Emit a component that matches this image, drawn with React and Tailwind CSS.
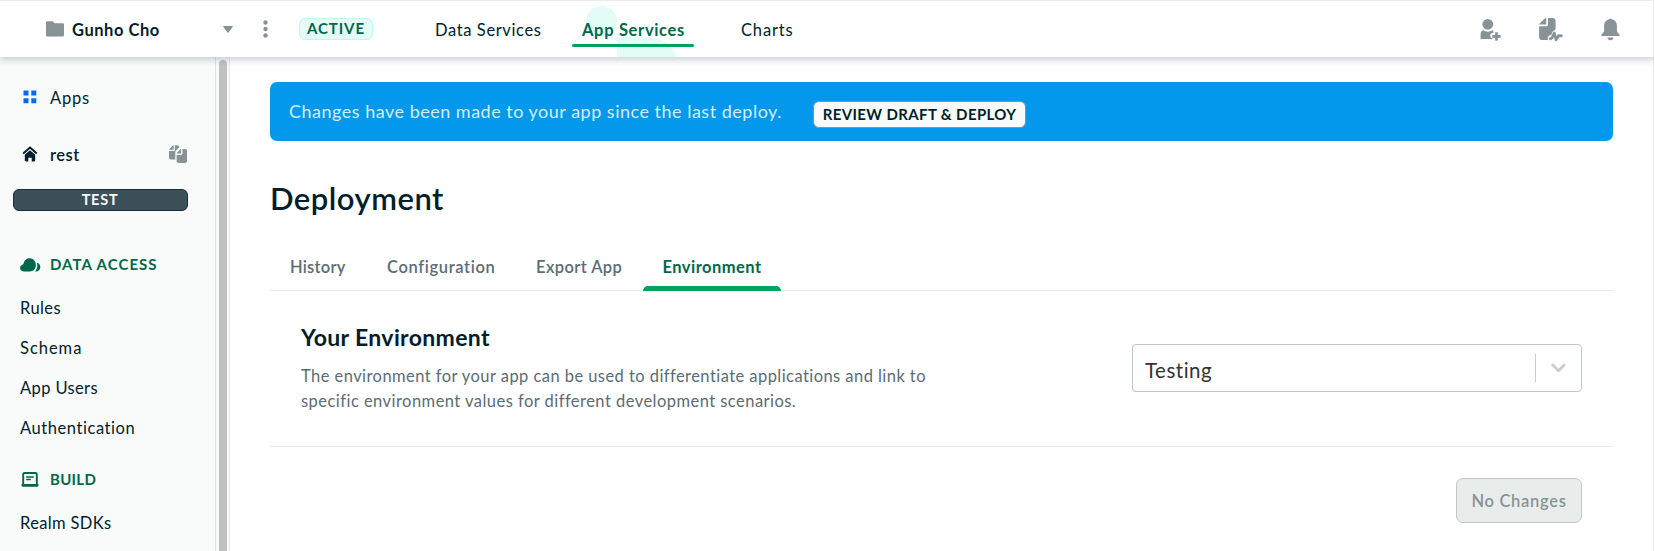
import React from "react";

const FolderIcon = () => (
  <svg className="block h-[16px] w-[18px] shrink-0" viewBox="0 0 18 16" fill="#889397">
    <path d="M0 1.6C0 .9.6.3 1.300.3H6.400c.5 0 .9.2 1.100.6l.6.9c.2.3.5.5.9.5h7.700c.7 0 1.300.6 1.300 1.300v10.600c0 .7-.6 1.300-1.300 1.300H1.300C.6 15.500 0 14.900 0 14.200z" />
  </svg>
);

const PersonPlusIcon = () => (
  <svg className="block h-[24px] w-[21px] shrink-0" viewBox="0 0 21 24" fill="#889397">
    <circle cx="7.800" cy="6.300" r="5.400" />
    <path d="M.6 21v-4.600C.6 14.200 1.500 12.900 3.200 12.300c1.400.9 2.900 1.400 4.600 1.400s3.200-.5 4.600-1.400c.4.1.7.300 1 .5v2.300h-.6a2.600 2.600 0 0 0-2.600 2.600 2.600 2.600 0 0 0 2.300 2.600V21z" />
    <path d="M15.700 14.800v2.900h-2.900v1.500h2.900v2.900h1.500v-2.900h2.900v-1.500h-2.900v-2.900z" stroke="#889397" strokeWidth="1.200" strokeLinejoin="round" />
  </svg>
);

const ActivityIcon = () => (
  <svg className="block h-[25px] w-[24px] shrink-0" viewBox="0 0 24 25" fill="#889397">
    <path d="M7.200 1v6.500H.3c0-.5.2-.9.6-1.300l4.800-4.600c.4-.4.9-.6 1.500-.6z" />
    <path d="M9 1h4.400c2 0 3.200 1.200 3.200 3.200v7.300c0 1.200-.5 1.700-1.700 2.200-1.100.5-1.500 1-1.900 2.300l-.6 1.800-1.900.8c-1.300.6-1.900 1.600-1.700 3l.2 1.500H3.300c-2 0-3.200-1.200-3.200-3.200V9.300h7.200C8.400 9.300 9 8.700 9 7.600z" />
    <path d="M11.400 21.800l1.700-.9 2.200-5 1.800 7 2.400-4.200 3 .1" fill="none" stroke="#889397" strokeWidth="2.700" strokeLinecap="round" strokeLinejoin="round" />
  </svg>
);

const BellIcon = () => (
  <svg className="block h-[23px] w-[19px] shrink-0" viewBox="0 0 19 23" fill="#889397">
    <path d="M8.200 1.300C8.500.8 9 .5 9.500.5s1 .3 1.300.8c3.200.6 5.100 3.100 5.100 6.400v4.600c0 1.300.6 2.400 2.100 3.800.5.5.8.8.8 1.300 0 .4-.3.6-.7.6H.9c-.4 0-.7-.2-.7-.6 0-.5.300-.8.8-1.300 1.500-1.400 2.100-2.500 2.100-3.800V7.700c0-3.300 1.900-5.800 5.100-6.400z" />
    <path d="M6.500 19.500h6c0 1.600-1.400 2.800-3 2.800s-3-1.200-3-2.800z" />
  </svg>
);

const GridIcon = () => (
  <svg className="block h-[14px] w-[14px]" viewBox="0 0 14 14" fill="#016bf8">
    <path d="M.5.5h5v5h-5zM8.300.5h5v5h-5zM.5 8.300h5v5h-5zM8.300 8.300h5v5h-5z" />
  </svg>
);

const HomeIcon = () => (
  <svg className="block h-[16px] w-[16px]" viewBox="0 0 16 16" fill="#001e2b">
    <path d="M1.200 7.500L8 1.500l6.800 6" fill="none" stroke="#001e2b" strokeWidth="1.900" />
    <path d="M8 4.200l5.200 4.600v5.400c0 .8-.4 1.200-1.200 1.200H9.700v-3.700H6.300v3.700H4c-.8 0-1.200-.4-1.200-1.200V8.800z" />
  </svg>
);

const CopyIcon = () => (
  <svg className="block h-[18px] w-[18px]" viewBox="0 0 18 18" fill="#889397">
    <path d="M4.700.2v4.500H.2c0-.4.200-.7.500-1L3.500.8c.3-.4.7-.6 1.200-.6z" />
    <path d="M6 .2h2.300c1.200 0 1.900.7 1.900 1.900v.6c-.5.1-.8.4-1.200.8L6.900 5.800c-.4.4-.6.900-.6 1.500v7.200H2.100C.7 14.500 0 13.800 0 12.400V6h4.300C5.400 6 6 5.500 6 4.400z" />
    <path d="M12.100 4v4.600H7.700c0-.4.200-.7.500-1l2.700-2.900c.3-.4.7-.6 1.200-.7z" />
    <path d="M13.500 4h2.400C17.300 4 18 4.700 18 6.100v9.700c0 1.400-.7 2.100-2.100 2.100H9.700c-1.400 0-2.100-.7-2.100-2.100V9.900h4.200c1.100 0 1.700-.6 1.700-1.700z" />
  </svg>
);

const CloudIcon = () => (
  <svg className="block h-[14px] w-[21px]" viewBox="0 0 21 14" fill="#00684a">
    <path d="M4.200 13.500C1.700 13.500.1 12 .1 9.900c0-2 1.400-3.500 3.300-3.700C4 2.700 6.300.3 9.500.3c3.700 0 6.400 2.900 6.400 6.800 0 3.800-2.600 6.400-6.100 6.400z" />
    <path d="M17 4.700c2.100.5 3.300 2.100 3.300 4.300 0 2.700-1.700 4.500-4.700 4.500h-.7c1.600-1.500 2.400-3.700 2.400-6.200 0-.9-.1-1.800-.3-2.600z" />
  </svg>
);

const LaptopIcon = () => (
  <svg className="block h-[15px] w-[18px]" viewBox="0 0 18 15" fill="none" stroke="#00684a">
    <path d="M2.200 12V2.300c0-.8.400-1.300 1.300-1.300h11c.9 0 1.300.5 1.300 1.300V12" strokeWidth="1.900" />
    <path d="M.5 12h17v1.300c0 .9-.5 1.500-1.400 1.500H1.900c-.9 0-1.400-.6-1.400-1.500z" fill="#00684a" stroke="none" />
    <path d="M5.200 5h7.600M5.200 7.500h4.700" strokeWidth="1.300" />
  </svg>
);

const NavLink = ({ children }) => <div className="flex h-10 items-center pt-px pl-5">{children}</div>;

export default function App() {
  return (
    <div className="flex h-[551px] w-[1654px] flex-col overflow-hidden whitespace-nowrap bg-white font-['Lato','Open_Sans',sans-serif] text-[16.5px] leading-6 text-[#001e2b]">
      <header className="relative z-10 flex h-[57px] shrink-0 items-center border-t border-r border-t-[#e8edeb] border-r-[#e8edeb] bg-white pr-[33px] pl-[46px] shadow-[0_3px_7px_0_rgba(0,30,43,0.2)]">
        <FolderIcon />
        <span className="ml-[8px] w-[151px] pt-[1px] font-bold tracking-[0.55px]">Gunho Cho</span>
        <svg className="block h-[7px] w-[10px]" viewBox="0 0 10 7" fill="#889397">
          <path d="M.7 0h8.600c.6 0 .8.5.4.9L5.500 6.500c-.3.400-.7.400-1 0L.3.900C-.1.500.1 0 .7 0z" />
        </svg>
        <svg className="ml-[30px] block h-[18px] w-[5px]" viewBox="0 0 5 18" fill="#889397">
          <circle cx="2.500" cy="2.500" r="2.200" />
          <circle cx="2.500" cy="9" r="2.200" />
          <circle cx="2.500" cy="15.500" r="2.200" />
        </svg>
        <span className="ml-[31px] flex h-[22px] w-[74px] items-center justify-center rounded-[6px] border border-[#c0fae6] bg-[#e3fcf7] pb-[2px] text-[15px] font-bold tracking-[0.9px] text-[#00684a]">ACTIVE</span>
        <nav className="ml-[62px] flex h-full grow items-center">
          <span className="w-[137px] pt-[1px] tracking-[0.62px]">Data Services</span>
          <div className="relative flex h-full w-[122px] items-center justify-center">
            <svg className="absolute top-0 left-0 block h-[56px] w-[122px]" viewBox="0 0 122 56" fill="#e3fcf7">
              <circle cx="29.500" cy="20.500" r="15.500" />
              <path d="M34 36h38c18 0 29 8 33 20H45V43c0-4-4-6-11-7z" />
            </svg>
            <span className="relative pt-[1px] pl-px font-bold tracking-[0.67px] text-[#00684a]">App Services</span>
            <span className="absolute bottom-[10px] left-0 h-[3px] w-full rounded-full bg-[#00a35c]" />
          </div>
          <span className="ml-[47px] pt-[1px] tracking-[0.85px]">Charts</span>
        </nav>
        <div className="flex items-center pt-px">
          <PersonPlusIcon />
          <span className="w-[38px]" />
          <ActivityIcon />
          <span className="w-[38px]" />
          <BellIcon />
        </div>
      </header>

      <div className="flex min-h-0 grow">
        <aside className="flex w-[216px] shrink-0 flex-col border-r border-[#e1e4e3] bg-[#f9fbfa] pt-[28px]">
          <div className="flex h-6 items-center pl-[23px]">
            <GridIcon />
            <span className="ml-[13px] pt-px tracking-[0.8px]">Apps</span>
          </div>
          <div className="mt-[33px] flex h-6 items-center pr-[28px] pl-[22px]">
            <HomeIcon />
            <span className="ml-[12px] grow pt-px font-semibold tracking-[0.5px]">rest</span>
            <CopyIcon />
          </div>
          <div className="mt-[23px] ml-[13px] flex h-[22px] w-[175px] items-center justify-center rounded-[6px] border border-[#1c2d38] bg-[#3d4f58] pr-px text-[14.5px] font-bold tracking-[0.75px] text-[#f9fbfa]">TEST</div>
          <div className="mt-[41px] flex h-6 items-center pl-[20px] text-[15px] font-bold tracking-[1.03px] text-[#00684a]">
            <span className="w-[30px] pt-px"><CloudIcon /></span>DATA ACCESS
          </div>
          <div className="mt-[11px]">
            <NavLink><span className="tracking-[0.4px]">Rules</span></NavLink>
            <NavLink><span className="tracking-[0.98px]">Schema</span></NavLink>
            <NavLink><span className="tracking-[0.38px]">App Users</span></NavLink>
            <NavLink><span className="tracking-[0.56px]">Authentication</span></NavLink>
          </div>
          <div className="mt-[20px] flex h-6 items-center pl-[21px] text-[15px] font-bold tracking-[0.3px] text-[#00684a]">
            <span className="w-[29px] pt-px"><LaptopIcon /></span>BUILD
          </div>
          <div className="mt-[11px]">
            <NavLink><span className="tracking-[0.35px]">Realm SDKs</span></NavLink>
          </div>
        </aside>
        <div className="flex w-[14px] shrink-0 justify-center border-r border-[#e8e8e8] bg-[#fafafa] pt-[3px]">
          <div className="h-full w-[8px] rounded-t-full bg-[#c1c1c1]" />
        </div>

        <main className="flex grow flex-col border-r border-[#e8edeb] pt-[25px] pr-[40px] pl-[40px]">
          <div className="flex h-[59px] shrink-0 rounded-[7px] bg-[#0498ec] pl-[19px]">
            <span className="mt-[17px] w-[524px] text-[18px] tracking-[0.5px] text-[#d3eff6]">Changes have been made to your app since the last deploy.</span>
            <button className="mt-[19px] flex h-[27px] w-[213px] items-center justify-center rounded-[6px] border border-[#889397] bg-[#f9fbfa] pb-[2px] text-[15px] font-bold tracking-[0.38px]">REVIEW DRAFT &amp; DEPLOY</button>
          </div>
          <h1 className="mt-[37px] h-[40px] text-[31px] leading-[40px] font-semibold tracking-[0.5px]">Deployment</h1>
          <div className="mt-[32px] flex h-[41px] shrink-0 border-b border-[#e8edeb] pl-[20px] font-semibold text-[#5c6c75]">
            <span className="mt-[4.500px] w-[97px] tracking-[0.24px]">History</span>
            <span className="mt-[4.500px] w-[149px] tracking-[0.64px]">Configuration</span>
            <span className="mt-[4.500px] w-[107px] tracking-[0.4px]">Export App</span>
            <span className="flex h-[41px] w-[138px] flex-col items-center justify-between pt-[4.500px] font-bold tracking-[0.46px] text-[#00684a]">
              Environment
              <span className="h-[5px] w-full rounded-t-[5px] bg-[#00a35c]" />
            </span>
          </div>
          <section className="flex h-[156px] shrink-0 justify-between border-b border-[#e8edeb] pr-[31px] pl-[31px]">
            <div className="pt-[30px]">
              <h2 className="text-[23px] leading-[32px] font-bold tracking-[0.36px]">Your Environment</h2>
              <p className="mt-[11px] leading-[25px] tracking-[0.44px] text-[#5c6c75]">
                The environment for your app can be used to differentiate applications and link to
                <br />
                <span className="tracking-[0.46px]">specific environment values for different development scenarios.</span>
              </p>
            </div>
            <div className="mt-[53px] flex h-[48px] w-[450px] items-center rounded-[4px] border border-[#c1c7c6] bg-white pr-[15px] pl-[12px]">
              <span className="grow pt-[4px] text-[20.5px] tracking-[0.5px] text-[#333333]">Testing</span>
              <span className="h-[28px] w-px bg-[#cccccc]" />
              <svg className="ml-[15px] block h-[10px] w-[15px]" viewBox="0 0 15 10" fill="none" stroke="#cccccc" strokeWidth="2.700" strokeLinecap="round" strokeLinejoin="round">
                <path d="M1.800 2l5.700 5.700L13.200 2" />
              </svg>
            </div>
          </section>
          <div className="mt-[31px] flex justify-end pr-[31px]">
            <button className="flex h-[45px] w-[126px] items-center justify-center rounded-[7px] border border-[#c1c7c6] bg-[#e8edeb] font-semibold tracking-[0.7px] text-[#889397]">No Changes</button>
          </div>
        </main>
      </div>
    </div>
  );
}
